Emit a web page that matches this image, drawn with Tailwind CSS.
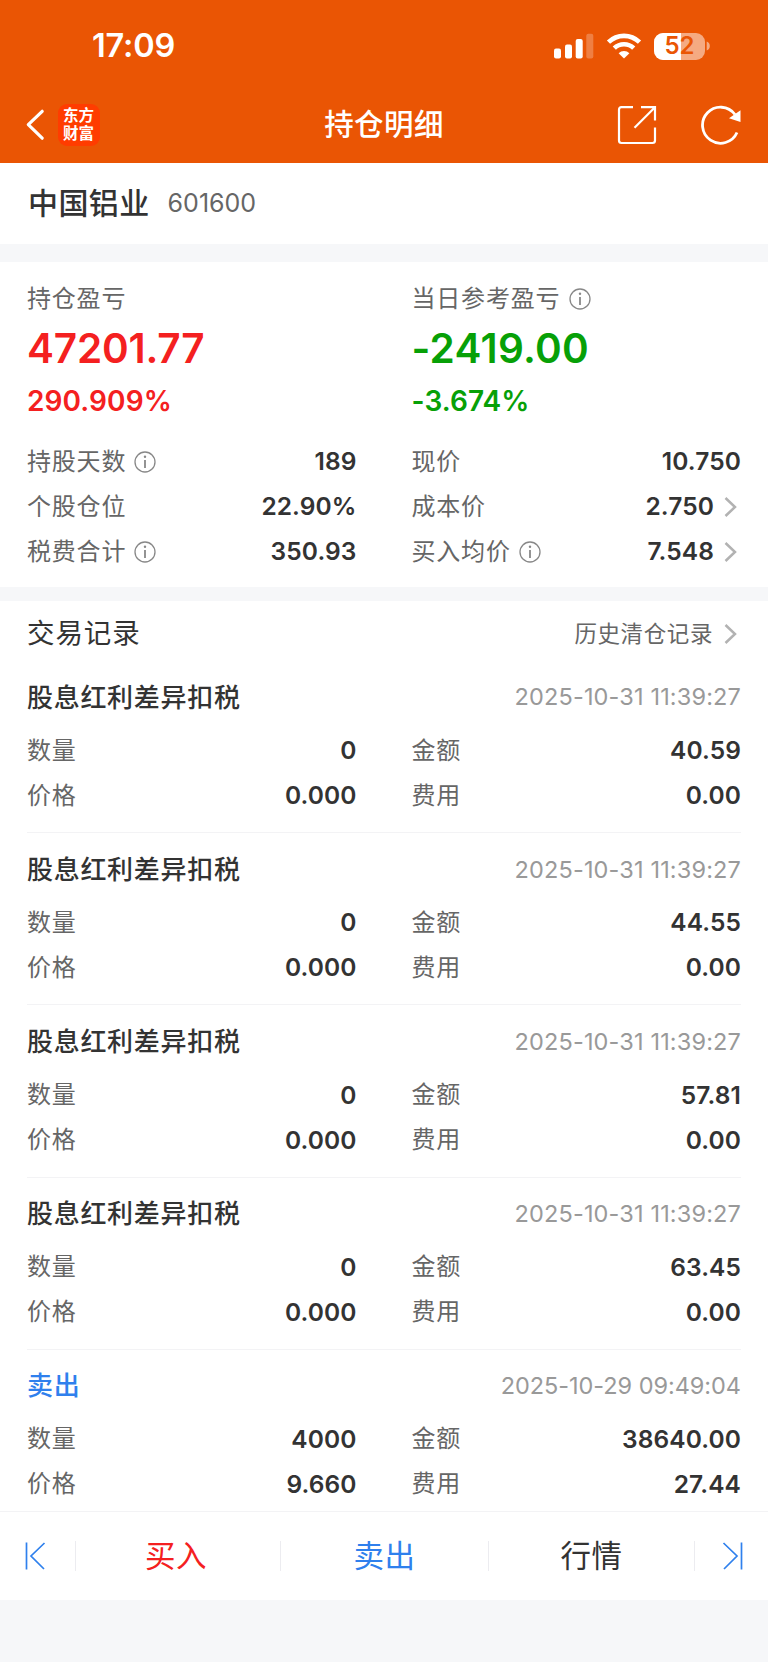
<!DOCTYPE html>
<html lang="zh-CN">
<head>
  <meta charset="UTF-8" />
  <meta name="viewport" content="width=device-width, initial-scale=1" />
  <title>持仓明细</title>
  <script src="https://cdn.jsdelivr.net/npm/@tailwindcss/browser@4"></script>
  <style>
    body {
      font-family: 'Inter', 'Noto Sans CJK SC', sans-serif;
    }
  </style>
</head>
<body class="bg-white text-[#333] w-[768px] h-[1662px] flex flex-col overflow-hidden">

<!-- HEADER -->
<header class="bg-[#ea5504] text-white h-[163px] shrink-0">

  <!-- STATUS BAR -->
  <div class="h-[86px] pt-[6px] pl-[92px] pr-[57px] flex items-center justify-between">
    <span class="pt-[1px] text-[32.5px] tracking-[-0.2px] font-semibold">17:09</span>
    <div class="flex items-center">
      <svg class="w-[40px] h-[26px]" viewBox="0 0 40 26" fill="#fff">
        <rect x="0" y="15.5" width="7" height="10" rx="2"/>
        <rect x="11" y="11.5" width="7" height="14" rx="2"/>
        <rect x="21.7" y="6" width="7" height="19.5" rx="2"/>
        <rect x="32.3" y="0.7" width="7" height="24.8" rx="2" fill-opacity=".25"/>
      </svg>
      <svg class="w-[36px] h-[26px] ml-[12px]" viewBox="0 0 36 26" fill="none" stroke="#fff" stroke-width="4.6">
        <path d="M2.5 9.2a22.2 22.2 0 0 1 31 0"/>
        <path d="M8.3 15.2a14 14 0 0 1 19.4 0"/>
        <path d="M18 25.6l-5.4-5.4a7.8 7.8 0 0 1 10.8 0z" fill="#fff" stroke="none"/>
      </svg>
      <div class="relative ml-[12px] w-[51px] h-[27px] rounded-[9px] overflow-hidden bg-white/50 flex items-center justify-center">
        <div class="absolute left-0 top-0 w-[27px] h-full bg-white"></div>
        <span class="relative text-[24px] leading-none font-semibold text-[#ea5504]">52</span>
      </div>
      <svg class="w-[5px] h-[10px] ml-[1px]" viewBox="0 0 5 10" fill="#fff" fill-opacity=".5"><path d="M.7 .5a4.8 4.8 0 0 1 0 9z"/></svg>
    </div>
  </div>

  <!-- NAV -->
  <div class="h-[77px] pl-[25px] pr-[25px] grid grid-cols-[1fr_auto_1fr] items-center">
    <div class="flex items-center">
      <svg class="w-[20px] h-[34px]" viewBox="0 0 20 34" fill="none" stroke="#fff" stroke-width="3.2" stroke-linecap="round" stroke-linejoin="round"><path d="M17.2 3.3L3.3 16.7l13.9 13.5"/></svg>
      <div class="ml-[12.5px] w-[42px] h-[42px] rounded-[9px] bg-[#ff3c00] flex flex-col items-center justify-center text-[15.5px] leading-[18px] font-bold">
        <span>东方</span>
        <span>财富</span>
      </div>
    </div>
    <h1 class="text-[29.5px] tracking-[0.4px] font-medium">持仓明细</h1>
    <div class="flex items-center justify-end">
      <svg class="w-[40px] h-[40px]" viewBox="0 0 40 40" fill="none" stroke="#fff" stroke-width="2.2">
        <path d="M16 2.2H4.5Q2 2.2 2 4.7V35.5Q2 38 4.5 38H35.5Q38 38 38 35.5V22.5"/>
        <path d="M24 2.2H38V15.5M38 2.2L17.5 22.7"/>
      </svg>
      <svg class="w-[42px] h-[42px] ml-[44px]" viewBox="0 0 42 42" fill="none" stroke="#fff" stroke-width="2.8">
        <path d="M36 28.5A18 18 0 1 1 34 10.5"/>
        <path d="M39.5 6.2V18L28 14.2z" fill="#fff" stroke="none"/>
      </svg>
    </div>
  </div>
</header>

<main class="flex-1 min-h-0 overflow-hidden">

  <!-- STOCK -->
  <section class="h-[81px] px-[28px] flex items-center">
    <h2 class="text-[30px] tracking-[0.4px] font-medium">中国铝业</h2>
    <span class="ml-[18px] text-[25px] text-[#666]">601600</span>
  </section>
  <div class="h-[18px] bg-[#f6f7f9]"></div>

  <!-- SUMMARY -->
  <section class="h-[325px] pt-[19px] px-[27px]">
    <div class="grid grid-cols-2 gap-x-[55px]">
      <div>
        <div class="h-[36px] flex items-center text-[24px] tracking-[0.8px] text-[#666]">持仓盈亏</div>
        <div class="mt-[2px] h-[60px] leading-[60px] text-[40.5px] tracking-[-0.2px] font-semibold text-[#f42020]">47201.77</div>
        <div class="mt-[2px] h-[40px] leading-[40px] text-[28px] tracking-[0.1px] font-semibold text-[#f42020]">290.909%</div>
      </div>
      <div>
        <div class="h-[36px] flex items-center text-[24px] tracking-[0.8px] text-[#666]">
          当日参考盈亏
          <svg class="w-[22px] h-[22px] ml-[8.5px]" viewBox="0 0 22 22" fill="none" stroke="#888" stroke-width="1.3"><circle cx="11" cy="11" r="10"/><path d="M11 9v8" stroke-width="1.8"/><circle cx="11" cy="5.8" r="1.2" fill="#888" stroke="none"/></svg>
        </div>
        <div class="mt-[2px] h-[60px] leading-[60px] text-[40.5px] tracking-[0.3px] font-semibold text-[#07a007]">-2419.00</div>
        <div class="mt-[2px] h-[40px] leading-[40px] text-[28px] tracking-[0.1px] font-semibold text-[#07a007]">-3.674%</div>
      </div>
    </div>
    <div id="stats" class="mt-[18px] grid grid-cols-2 gap-x-[55px]"></div>
  </section>
  <div class="h-[14px] bg-[#f6f7f9]"></div>

  <!-- RECORDS -->
  <section class="px-[27px]">
    <div class="h-[60px] pt-[6px] flex items-center justify-between">
      <h3 class="text-[27.5px] tracking-[0.9px]">交易记录</h3>
      <div class="flex items-center text-[22.5px] tracking-[0.6px] text-[#666]">
        历史清仓记录
        <svg class="w-[13px] h-[22px] ml-[11px] mr-[4px]" viewBox="0 0 13 22" fill="none" stroke="#b2b2b2" stroke-width="2.5"><path d="M1.5 2l9.5 9-9.5 9"/></svg>
      </div>
    </div>
    <div id="records"></div>
  </section>
</main>

<!-- BOTTOM BAR -->
<footer class="h-[151px] shrink-0 bg-[#f6f7f9]">
  <div class="h-[89px] bg-white border-t border-[#f3f3f5] flex items-center text-[30.5px] tracking-[0.6px]">
    <div class="w-[75px] pl-[24px]">
      <svg class="w-[22px] h-[28px]" viewBox="0 0 22 28" fill="none" stroke="#2f80ed" stroke-width="1.7"><path d="M2.5 0.5v27M20.5 1L7 14l13 13"/></svg>
    </div>
    <div class="w-[205px] h-[30px] pr-[4px] flex items-center justify-center border-l border-[#ececf0] text-[#f42020]">买入</div>
    <div class="w-[208px] h-[30px] flex items-center justify-center border-l border-[#ececf0] text-[#2f80ed]">卖出</div>
    <div class="w-[206px] h-[30px] flex items-center justify-center border-l border-[#ececf0]">行情</div>
    <div class="flex-1 h-[30px] flex items-center border-l border-[#ececf0] pl-[27px]">
      <svg class="w-[22px] h-[28px]" viewBox="0 0 22 28" fill="none" stroke="#2f80ed" stroke-width="1.7"><path d="M19.5 0.5v27M1.5 1L15 14 2 27"/></svg>
    </div>
  </div>
</footer>

<script>
  const infoIcon = `<svg class="w-[22px] h-[22px] ml-[8px]" viewBox="0 0 22 22" fill="none" stroke="#888" stroke-width="1.3"><circle cx="11" cy="11" r="10"/><path d="M11 9v8" stroke-width="1.8"/><circle cx="11" cy="5.8" r="1.2" fill="#888" stroke="none"/></svg>`;
  const arrowIcon = `<svg class="w-[13px] h-[22px] ml-[10px] mr-[4px]" viewBox="0 0 13 22" fill="none" stroke="#b2b2b2" stroke-width="2.5"><path d="M1.5 2l9.5 9-9.5 9"/></svg>`;

  const stats = [
    { label: '持股天数', value: '189', info: true },
    { label: '现价', value: '10.750' },
    { label: '个股仓位', value: '22.90%' },
    { label: '成本价', value: '2.750', arrow: true },
    { label: '税费合计', value: '350.93', info: true },
    { label: '买入均价', value: '7.548', info: true, arrow: true },
  ];

  const records = [
    { type: '股息红利差异扣税', time: '2025-10-31 11:39:27', qty: '0', amount: '40.59', price: '0.000', fee: '0.00' },
    { type: '股息红利差异扣税', time: '2025-10-31 11:39:27', qty: '0', amount: '44.55', price: '0.000', fee: '0.00' },
    { type: '股息红利差异扣税', time: '2025-10-31 11:39:27', qty: '0', amount: '57.81', price: '0.000', fee: '0.00' },
    { type: '股息红利差异扣税', time: '2025-10-31 11:39:27', qty: '0', amount: '63.45', price: '0.000', fee: '0.00' },
    { type: '卖出', time: '2025-10-29 09:49:04', qty: '4000', amount: '38640.00', price: '9.660', fee: '27.44', sell: true },
  ];

  function row(item) {
    return `
      <div class="h-[45px] flex items-center">
        <span class="text-[24px] tracking-[0.8px] text-[#666]">${item.label}</span>
        ${item.info ? infoIcon : ''}
        <span class="ml-auto text-[24.5px] font-semibold tracking-[0.1px]">${item.value}</span>
        ${item.arrow ? arrowIcon : ''}
      </div>
    `;
  }

  document.getElementById('stats').innerHTML = stats.map(row).join('');

  document.getElementById('records').innerHTML = records.map(r => `
    <article class="h-[172.2px] pt-[18px] border-b border-[#f3f3f5]">
      <div class="h-[36px] mb-[13px] flex items-center justify-between">
        <h4 class="text-[26px] tracking-[0.7px] font-medium ${r.sell ? 'text-[#2f80ed]' : ''}">${r.type}</h4>
        <time class="text-[23.5px] text-[#999] ${r.sell ? 'tracking-[-0.05px]' : 'tracking-[0.15px]'}">${r.time}</time>
      </div>
      <div class="grid grid-cols-2 gap-x-[55px]">
        ${row({ label: '数量', value: r.qty })}
        ${row({ label: '金额', value: r.amount })}
        ${row({ label: '价格', value: r.price })}
        ${row({ label: '费用', value: r.fee })}
      </div>
    </article>
  `).join('');
</script>

</body>
</html>
